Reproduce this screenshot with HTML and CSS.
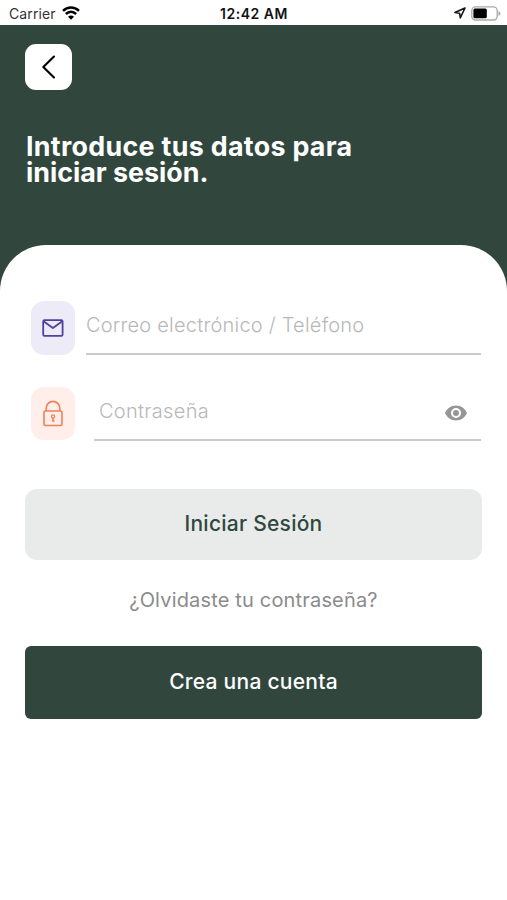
FILE: index.html
```html
<!DOCTYPE html>
<html lang="es">
<head>
<meta charset="utf-8">
<title>Iniciar Sesión</title>
<link rel="stylesheet" href="styles.css">
</head>
<body>
<div class="status">
  <div class="status-left">
    <span class="carrier">Carrier</span>
    <svg class="wifi" width="18" height="14" viewBox="0 0 18 14" fill="none" stroke="#000" stroke-width="2.5"><path d="M1 4.800C5.600.5 12.400.5 17 4.800M3.900 8C7 5.100 11 5.100 14.100 8"/><path d="M9 13.800 6 10.700c1.700-1.500 4.300-1.500 6 0z" fill="#000" stroke="none"/></svg>
  </div>
  <span class="clock">12:42 AM</span>
  <div class="status-right">
    <svg width="12" height="12" viewBox="0 0 12 12" fill="none" stroke="#111" stroke-width="1.500" stroke-linejoin="round"><path d="M11 1 .9 5.500l4.700.7.7 4.700z"/></svg>
    <svg width="30" height="15" viewBox="0 0 30 15"><rect x=".8" y=".8" width="25.400" height="13.200" rx="3.700" fill="#fff" stroke="#aaa" stroke-width="1.300"/><rect x="2.400" y="2.500" width="13.400" height="9.800" rx="1.500"/><path d="M27.500 5v5q2-1 2-2.500t-2-2.500z" fill="#aaa"/></svg>
  </div>
</div>
<main>
  <header>
    <button class="back" aria-label="Volver"><svg width="47" height="47" viewBox="0 0 47 47" fill="none" stroke="#000" stroke-width="2.100" stroke-linecap="round" stroke-linejoin="round"><path d="M29 13.500 18.300 24 29 34.500"/></svg></button>
    <h1><span class="line-one">Introduce tus datos para</span><span class="line-two">iniciar sesión.</span></h1>
  </header>
  <section class="sheet">
    <div class="row">
      <div class="tile mail"><svg width="22" height="18" viewBox="0 0 22 18" fill="none" stroke="#50429c" stroke-width="1.800" stroke-linejoin="round"><rect x="1.200" y="1.200" width="19.400" height="15.600" rx="1.300"/><path d="m1.500 2.200 9.400 6.800 9.400-6.800"/></svg></div>
      <div class="field email"><span>Correo electrónico / Teléfono</span></div>
    </div>
    <div class="row">
      <div class="tile lock"><svg width="20" height="27" viewBox="0 0 20 27" fill="none" stroke="#ef8157" stroke-width="1.600"><rect x="1" y="11" width="18" height="14.500" rx="1.500"/><path d="M3.200 11V8.200a6.800 6.800 0 0 1 13.600 0V11"/><circle cx="10" cy="16.500" r="1.600" stroke-width="1.200"/><path d="M10 18v4M10 20.800h1.400" stroke-width="1.500"/></svg></div>
      <div class="field password"><span>Contraseña</span>
        <svg width="22" height="16" viewBox="0 0 22 16"><path fill="#969696" fill-rule="evenodd" d="M11 .5C6 .5 1.800 3.600 0 8c1.800 4.400 6 7.500 11 7.500S20.200 12.400 22 8C20.200 3.600 16 .5 11 .5zM11 13A5 5 0 1 1 11 3a5 5 0 0 1 0 10zm0-8a3 3 0 1 0 0 6 3 3 0 0 0 0-6z"/></svg>
      </div>
    </div>
    <button class="btn login"><span>Iniciar Sesión</span></button>
    <a class="forgot">¿Olvidaste tu contraseña?</a>
    <button class="btn create"><span>Crea una cuenta</span></button>
  </section>
</main>
</body>
</html>
```
FILE: styles.css
```css
* { box-sizing: border-box; }
body { margin: 0; background: #fff; font-family: Inter, "Liberation Sans", sans-serif; height: 900px; overflow: hidden; }
button { border: 0; padding: 0; font-family: inherit; display: block; }
.status { height: 25px; display: grid; grid-template-columns: 1fr auto 1fr; align-items: center; padding: 2px 6px 0 9px; font-size: 14px; line-height: 22px; color: #111; }
.status-left, .status-right { display: flex; align-items: center; }
.status-left { gap: 6px; }
.carrier { color: #333; letter-spacing: 0.1px; }
.wifi { margin-top: -2px; }
.clock { font-weight: 600; letter-spacing: 0.5px; margin-right: 2px; }
.status-right { justify-content: flex-end; gap: 5px; margin-top: -1px; }
main { background: #31473e; }
header { height: 220px; padding: 19px 25px 0; }
.back { width: 47px; height: 46px; border-radius: 11px; background: #fff; }
.back svg { display: block; margin-top: -1px; }
h1 { margin: 43px 0 0 1px; font-size: 26.8px; line-height: 26px; font-weight: 700; color: #fff; white-space: nowrap; }
h1 span { display: block; }
.line-one { letter-spacing: 0.32px; }
.line-two { letter-spacing: 0; }
.sheet { background: #fff; border-radius: 46px 46px 0 0; height: 655px; padding: 56px 25px 0; display: flex; flex-direction: column; }
.row { display: flex; height: 54px; margin: 0 1px 32px 6px; }
.tile { width: 44px; height: 54px; border-radius: 13px; display: flex; align-items: center; justify-content: center; }
.mail { background: #eeebf8; }
.lock { background: #ffeeea; height: 53px; }
.field { flex: 1; border-bottom: 2px solid #cacaca; display: flex; justify-content: space-between; font-size: 20px; font-weight: 300; line-height: 48px; color: #b8b8b8; white-space: nowrap; }
.email { margin-left: 11px; letter-spacing: 0.22px; }
.password { margin-left: 19px; padding: 0 14px 0 5px; letter-spacing: 0.3px; }
.password svg { margin-top: 18px; }
.btn { width: 457px; font-size: 21px; font-weight: 500; letter-spacing: 0.25px; }
.login { height: 71px; margin-top: 16px; border-radius: 12px; background: #e8ebea; color: #31473e; padding-bottom: 2px; }
.forgot { text-align: center; margin-top: 25px; height: 30px; line-height: 30px; font-size: 20px; letter-spacing: 0.17px; color: #8b8b8b; }
.create { height: 73px; margin-top: 31px; border-radius: 6px; background: #31473e; color: #fff; padding-bottom: 3px; }
```
